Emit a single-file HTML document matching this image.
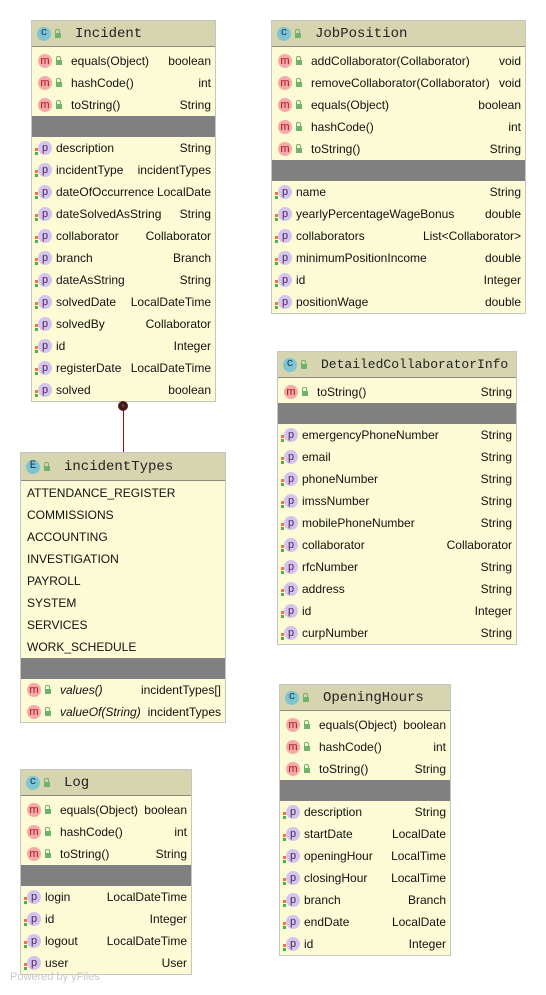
<!DOCTYPE html><html><head><style>
body{margin:0;width:546px;height:995px;background:#fff;position:relative;font-family:"Liberation Sans",sans-serif;overflow:hidden}
.b{position:absolute;background:#fdfbd5;border:1px solid #c6c6c0;box-sizing:border-box}
.h{height:25px;background:#d7d5b0;border-bottom:1px solid #8a8a80;display:flex;align-items:center;padding-left:5px;font:14px "Liberation Mono",monospace;color:#222;white-space:nowrap}
.s{padding-top:3px}
.g{background:#808080;height:21px}
.r{height:22px;display:flex;align-items:center;padding:0 4px 0 6px;font-size:12px;color:#111;white-space:nowrap}
.r .n{flex:1}
.i{width:14px;height:14px;border-radius:50%;display:inline-flex;align-items:center;justify-content:center;font-size:11px;line-height:1;margin-right:4px;flex:none}
.c{background:#7ec5d2;color:#135}
.m{background:#f5a9a9;color:#a11}
.p{background:#d2c4ef;color:#525;position:relative}
.p:before{content:"";position:absolute;left:-3px;top:7px;width:3px;height:3px;background:#e57a3a;box-shadow:0 4px 0 #4caf50}
.l{width:6px;height:5px;background:#6fb36a;margin-right:9px;position:relative;margin-top:3px;flex:none}
.l:before{content:"";position:absolute;left:0;top:-4px;width:3px;height:3px;border:1px solid #6fb36a;border-bottom:none;border-radius:2px 2px 0 0}
.hl{margin-right:14px}
.e{padding-left:6px}
i{font-style:italic}
</style></head><body>

<div class="b" style="left:31px;top:20px;width:185px;height:382px">
<div class="h"><span class="i c">c</span><span class="l hl"></span>Incident</div>
<div class="s">
<div class="r"><span class="i m">m</span><span class="l"></span><span class="n">equals(Object)</span>boolean</div>
<div class="r"><span class="i m">m</span><span class="l"></span><span class="n">hashCode()</span>int</div>
<div class="r"><span class="i m">m</span><span class="l"></span><span class="n">toString()</span>String</div>
</div>
<div class="g"></div>
<div class="r"><span class="i p">p</span><span class="n">description</span>String</div>
<div class="r"><span class="i p">p</span><span class="n">incidentType</span>incidentTypes</div>
<div class="r"><span class="i p">p</span><span class="n">dateOfOccurrence</span>LocalDate</div>
<div class="r"><span class="i p">p</span><span class="n">dateSolvedAsString</span>String</div>
<div class="r"><span class="i p">p</span><span class="n">collaborator</span>Collaborator</div>
<div class="r"><span class="i p">p</span><span class="n">branch</span>Branch</div>
<div class="r"><span class="i p">p</span><span class="n">dateAsString</span>String</div>
<div class="r"><span class="i p">p</span><span class="n">solvedDate</span>LocalDateTime</div>
<div class="r"><span class="i p">p</span><span class="n">solvedBy</span>Collaborator</div>
<div class="r"><span class="i p">p</span><span class="n">id</span>Integer</div>
<div class="r"><span class="i p">p</span><span class="n">registerDate</span>LocalDateTime</div>
<div class="r"><span class="i p">p</span><span class="n">solved</span>boolean</div>
</div>

<div style="position:absolute;left:123px;top:406px;width:1px;height:47px;background:#8b1010"></div>
<div style="position:absolute;left:118px;top:401px;width:10px;height:10px;border-radius:50%;background:#222;border:1px solid #8b1010;box-sizing:border-box;color:#c33;font-size:9px;line-height:8px;text-align:center">+</div>

<div class="b" style="left:271px;top:20px;width:255px;height:294px">
<div class="h"><span class="i c">c</span><span class="l hl"></span>JobPosition</div>
<div class="s">
<div class="r"><span class="i m">m</span><span class="l"></span><span class="n">addCollaborator(Collaborator)</span>void</div>
<div class="r"><span class="i m">m</span><span class="l"></span><span class="n">removeCollaborator(Collaborator)</span>void</div>
<div class="r"><span class="i m">m</span><span class="l"></span><span class="n">equals(Object)</span>boolean</div>
<div class="r"><span class="i m">m</span><span class="l"></span><span class="n">hashCode()</span>int</div>
<div class="r"><span class="i m">m</span><span class="l"></span><span class="n">toString()</span>String</div>
</div>
<div class="g"></div>
<div class="r"><span class="i p">p</span><span class="n">name</span>String</div>
<div class="r"><span class="i p">p</span><span class="n">yearlyPercentageWageBonus</span>double</div>
<div class="r"><span class="i p">p</span><span class="n">collaborators</span>List&lt;Collaborator&gt;</div>
<div class="r"><span class="i p">p</span><span class="n">minimumPositionIncome</span>double</div>
<div class="r"><span class="i p">p</span><span class="n">id</span>Integer</div>
<div class="r"><span class="i p">p</span><span class="n">positionWage</span>double</div>
</div>

<div class="b" style="left:277px;top:351px;width:240px;height:294px">
<div class="h" style="font-size:13px"><span class="i c">c</span><span class="l hl"></span>DetailedCollaboratorInfo</div>
<div class="s">
<div class="r"><span class="i m">m</span><span class="l"></span><span class="n">toString()</span>String</div>
</div>
<div class="g"></div>
<div class="r"><span class="i p">p</span><span class="n">emergencyPhoneNumber</span>String</div>
<div class="r"><span class="i p">p</span><span class="n">email</span>String</div>
<div class="r"><span class="i p">p</span><span class="n">phoneNumber</span>String</div>
<div class="r"><span class="i p">p</span><span class="n">imssNumber</span>String</div>
<div class="r"><span class="i p">p</span><span class="n">mobilePhoneNumber</span>String</div>
<div class="r"><span class="i p">p</span><span class="n">collaborator</span>Collaborator</div>
<div class="r"><span class="i p">p</span><span class="n">rfcNumber</span>String</div>
<div class="r"><span class="i p">p</span><span class="n">address</span>String</div>
<div class="r"><span class="i p">p</span><span class="n">id</span>Integer</div>
<div class="r"><span class="i p">p</span><span class="n">curpNumber</span>String</div>
</div>

<div class="b" style="left:20px;top:452px;width:206px;height:271px">
<div class="h" style="height:27px"><span class="i c">E</span><span class="l hl"></span>incidentTypes</div>
<div class="s" style="padding-top:1px">
<div class="r e">ATTENDANCE_REGISTER</div>
<div class="r e">COMMISSIONS</div>
<div class="r e">ACCOUNTING</div>
<div class="r e">INVESTIGATION</div>
<div class="r e">PAYROLL</div>
<div class="r e">SYSTEM</div>
<div class="r e">SERVICES</div>
<div class="r e">WORK_SCHEDULE</div>
</div>
<div class="g"></div>
<div class="r"><span class="i m">m</span><span class="l"></span><span class="n"><i>values()</i></span>incidentTypes[]</div>
<div class="r"><span class="i m">m</span><span class="l"></span><span class="n"><i>valueOf(String)</i></span>incidentTypes</div>
</div>

<div class="b" style="left:20px;top:769px;width:172px;height:206px">
<div class="h"><span class="i c">c</span><span class="l hl"></span>Log</div>
<div class="s">
<div class="r"><span class="i m">m</span><span class="l"></span><span class="n">equals(Object)</span>boolean</div>
<div class="r"><span class="i m">m</span><span class="l"></span><span class="n">hashCode()</span>int</div>
<div class="r"><span class="i m">m</span><span class="l"></span><span class="n">toString()</span>String</div>
</div>
<div class="g"></div>
<div class="r"><span class="i p">p</span><span class="n">login</span>LocalDateTime</div>
<div class="r"><span class="i p">p</span><span class="n">id</span>Integer</div>
<div class="r"><span class="i p">p</span><span class="n">logout</span>LocalDateTime</div>
<div class="r"><span class="i p">p</span><span class="n">user</span>User</div>
</div>

<div class="b" style="left:279px;top:684px;width:172px;height:272px">
<div class="h"><span class="i c">c</span><span class="l hl"></span>OpeningHours</div>
<div class="s">
<div class="r"><span class="i m">m</span><span class="l"></span><span class="n">equals(Object)</span>boolean</div>
<div class="r"><span class="i m">m</span><span class="l"></span><span class="n">hashCode()</span>int</div>
<div class="r"><span class="i m">m</span><span class="l"></span><span class="n">toString()</span>String</div>
</div>
<div class="g"></div>
<div class="r"><span class="i p">p</span><span class="n">description</span>String</div>
<div class="r"><span class="i p">p</span><span class="n">startDate</span>LocalDate</div>
<div class="r"><span class="i p">p</span><span class="n">openingHour</span>LocalTime</div>
<div class="r"><span class="i p">p</span><span class="n">closingHour</span>LocalTime</div>
<div class="r"><span class="i p">p</span><span class="n">branch</span>Branch</div>
<div class="r"><span class="i p">p</span><span class="n">endDate</span>LocalDate</div>
<div class="r"><span class="i p">p</span><span class="n">id</span>Integer</div>
</div>

<div style="position:absolute;left:10px;top:971px;font-size:11px;color:#c8c8c8">Powered by yFiles</div>
</body></html>
